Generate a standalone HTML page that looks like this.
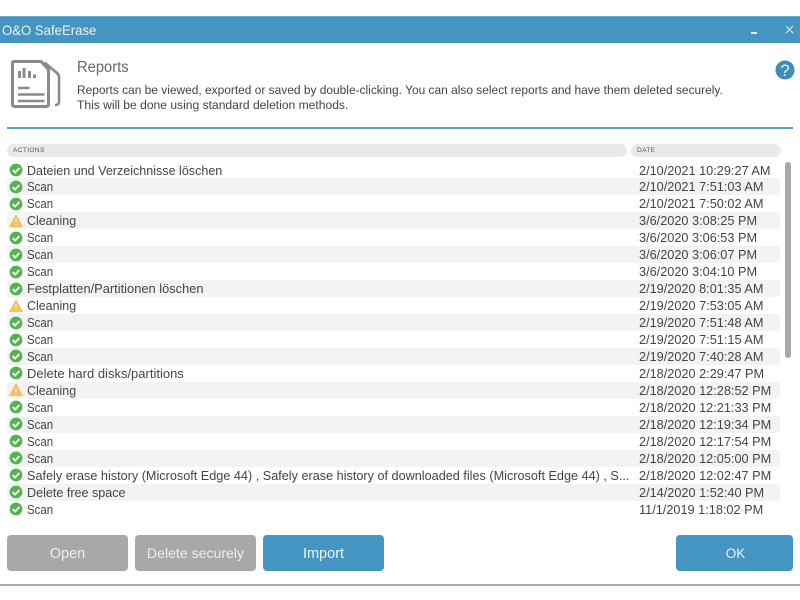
<!DOCTYPE html>
<html><head><meta charset="utf-8"><style>
html,body{margin:0;padding:0;background:#fff;width:800px;height:600px;overflow:hidden}
body{font-family:"Liberation Sans",sans-serif;color:#444;position:relative;filter:blur(.3px)}
.a{position:absolute;white-space:nowrap}
.sx{transform-origin:0 50%}
.row{position:absolute;left:7px;width:773px;height:17px}
.row.s{background:#f3f3f3;border-radius:3px}
.row svg{position:absolute;left:2px;top:1.5px}
.row .t{position:absolute;left:20px;top:0;line-height:17px;font-size:13px;color:#444;white-space:nowrap;transform-origin:0 50%}
.row .d{position:absolute;left:632px;top:0;line-height:17px;font-size:13px;color:#444;white-space:nowrap;transform-origin:0 50%;transform:scaleX(.978)}
.sc{transform:scaleX(.88)}
.cl{transform:scaleX(.957)}
.btn{position:absolute;top:535px;height:36px;line-height:38px;text-align:center;color:#fff;font-size:14.5px;border-radius:4px}
</style></head><body>
<svg width="0" height="0" style="position:absolute"><defs>
<symbol id="ok" viewBox="0 0 14 14"><circle cx="7" cy="7" r="6.4" fill="#52b44f"/><path d="M3.7 7.100l2.400 2.400 4.300-4.500" fill="none" stroke="#fff" stroke-width="1.900"/></symbol>
<symbol id="w" viewBox="0 0 14 14"><path d="M7 1.200L13.400 12.600H.6Z" fill="#f2c25e" stroke="#f2c25e" stroke-linejoin="round"/><path d="M7 5v4M7 10.200v1.200" stroke="#fff" stroke-width="1"/></symbol>
</defs></svg>

<div class="a" style="left:0;top:16px;width:800px;height:27px;background:#4495c1;border-top:1px solid #6aaccf;box-sizing:border-box"></div>
<div class="a sx" style="left:2px;top:22px;font-size:14px;line-height:16px;color:#e8f3f8;transform:scaleX(.94)">O&amp;O SafeErase</div>
<div class="a" style="left:751px;top:32px;width:6px;height:1.500px;background:#dceaf2"></div>
<svg class="a" style="left:785px;top:25px" width="9" height="9"><path d="M1 1l7 7M8 1l-7 7" stroke="#dceaf2" stroke-width="1.100"/></svg>

<svg class="a" style="left:0;top:50px" width="70" height="70" viewBox="0 50 70 70" fill="none" stroke="#8a8a8a">
<path d="M14 61.500H41L48.500 69.500V104Q48.500 106.500 46 106.500H15Q12.500 106.500 12.500 104V63Q12.500 61.500 14 61.500Z" stroke-width="3"/>
<path d="M44.500 62.500L57 73Q59 75 59 77V102Q59 105 55 105" stroke-width="2.600"/>
<path d="M19.500 78V71M24 78V68M29.500 78V71M34.500 78V74.500" stroke-width="3"/>
<path d="M18 88H29.500M18 94.500H44.500M18 101H44.500" stroke-width="2.400"/>
</svg>

<div class="a sx" style="left:77px;top:59px;font-size:15.500px;line-height:18px;color:#666;transform:scaleX(.95)">Reports</div>
<div class="a sx" style="left:77px;top:83px;font-size:12.400px;line-height:15px;color:#444;transform:scaleX(.963)">Reports can be viewed, exported or saved by double-clicking. You can also select reports and have them deleted securely.</div>
<div class="a sx" style="left:77px;top:98px;font-size:12.400px;line-height:15px;color:#444;transform:scaleX(.975)">This will be done using standard deletion methods.</div>

<svg class="a" style="left:775px;top:60px" width="20" height="20"><circle cx="10" cy="10" r="9.500" fill="#3e8cb8"/><text x="10" y="16" text-anchor="middle" font-family="Liberation Sans" font-size="17" fill="#e8f3f8">?</text></svg>

<div class="a" style="left:7px;top:127px;width:786px;height:1.500px;background:#5a9fc0"></div>

<div class="a" style="left:7px;top:144px;width:620px;height:13px;background:#eaeaea;border-radius:7px"></div>
<div class="a" style="left:13px;top:146px;font-size:6.500px;line-height:9px;color:#555;letter-spacing:.4px">ACTIONS</div>
<div class="a" style="left:631px;top:144px;width:150px;height:13px;background:#eaeaea;border-radius:7px"></div>
<div class="a" style="left:637px;top:146px;font-size:6.500px;line-height:9px;color:#555;letter-spacing:.4px">DATE</div>

<div class="a" style="left:785px;top:162px;width:6px;height:196px;background:#a8a8a8;border-radius:3px"></div>

<div class="row" style="top:161.500px"><svg width="14" height="14"><use href="#ok"/></svg><span class="t" style="transform:scaleX(.965)">Dateien und Verzeichnisse löschen</span><span class="d">2/10/2021 10:29:27 AM</span></div>
<div class="row s" style="top:178.450px"><svg width="14" height="14"><use href="#ok"/></svg><span class="t sc">Scan</span><span class="d">2/10/2021 7:51:03 AM</span></div>
<div class="row" style="top:195.400px"><svg width="14" height="14"><use href="#ok"/></svg><span class="t sc">Scan</span><span class="d">2/10/2021 7:50:02 AM</span></div>
<div class="row s" style="top:212.350px"><svg width="14" height="14"><use href="#w"/></svg><span class="t cl">Cleaning</span><span class="d">3/6/2020 3:08:25 PM</span></div>
<div class="row" style="top:229.300px"><svg width="14" height="14"><use href="#ok"/></svg><span class="t sc">Scan</span><span class="d">3/6/2020 3:06:53 PM</span></div>
<div class="row s" style="top:246.250px"><svg width="14" height="14"><use href="#ok"/></svg><span class="t sc">Scan</span><span class="d">3/6/2020 3:06:07 PM</span></div>
<div class="row" style="top:263.200px"><svg width="14" height="14"><use href="#ok"/></svg><span class="t sc">Scan</span><span class="d">3/6/2020 3:04:10 PM</span></div>
<div class="row s" style="top:280.150px"><svg width="14" height="14"><use href="#ok"/></svg><span class="t" style="transform:scaleX(.989)">Festplatten/Partitionen löschen</span><span class="d">2/19/2020 8:01:35 AM</span></div>
<div class="row" style="top:297.100px"><svg width="14" height="14"><use href="#w"/></svg><span class="t cl">Cleaning</span><span class="d">2/19/2020 7:53:05 AM</span></div>
<div class="row s" style="top:314.050px"><svg width="14" height="14"><use href="#ok"/></svg><span class="t sc">Scan</span><span class="d">2/19/2020 7:51:48 AM</span></div>
<div class="row" style="top:331px"><svg width="14" height="14"><use href="#ok"/></svg><span class="t sc">Scan</span><span class="d">2/19/2020 7:51:15 AM</span></div>
<div class="row s" style="top:347.950px"><svg width="14" height="14"><use href="#ok"/></svg><span class="t sc">Scan</span><span class="d">2/19/2020 7:40:28 AM</span></div>
<div class="row" style="top:364.900px"><svg width="14" height="14"><use href="#ok"/></svg><span class="t">Delete hard disks/partitions</span><span class="d">2/18/2020 2:29:47 PM</span></div>
<div class="row s" style="top:381.850px"><svg width="14" height="14"><use href="#w"/></svg><span class="t cl">Cleaning</span><span class="d">2/18/2020 12:28:52 PM</span></div>
<div class="row" style="top:398.800px"><svg width="14" height="14"><use href="#ok"/></svg><span class="t sc">Scan</span><span class="d">2/18/2020 12:21:33 PM</span></div>
<div class="row s" style="top:415.750px"><svg width="14" height="14"><use href="#ok"/></svg><span class="t sc">Scan</span><span class="d">2/18/2020 12:19:34 PM</span></div>
<div class="row" style="top:432.700px"><svg width="14" height="14"><use href="#ok"/></svg><span class="t sc">Scan</span><span class="d">2/18/2020 12:17:54 PM</span></div>
<div class="row s" style="top:449.650px"><svg width="14" height="14"><use href="#ok"/></svg><span class="t sc">Scan</span><span class="d">2/18/2020 12:05:00 PM</span></div>
<div class="row" style="top:466.600px"><svg width="14" height="14"><use href="#ok"/></svg><span class="t" style="transform:scaleX(.974)">Safely erase history (Microsoft Edge 44) , Safely erase history of downloaded files (Microsoft Edge 44) , S...</span><span class="d">2/18/2020 12:02:47 PM</span></div>
<div class="row s" style="top:483.550px"><svg width="14" height="14"><use href="#ok"/></svg><span class="t" style="transform:scaleX(.967)">Delete free space</span><span class="d">2/14/2020 1:52:40 PM</span></div>
<div class="row" style="top:500.500px"><svg width="14" height="14"><use href="#ok"/></svg><span class="t sc">Scan</span><span class="d">11/1/2019 1:18:02 PM</span></div>

<div class="btn" style="left:7px;width:121px;background:#a8a8a8;color:#eee">Open</div>
<div class="btn" style="left:135px;width:121px;background:#a8a8a8;color:#eee;font-size:14.100px;line-height:37px">Delete securely</div>
<div class="btn" style="left:263px;width:121px;background:#4495c1;color:#eaf4f9">Import</div>
<div class="btn" style="left:676px;width:117px;box-sizing:border-box;padding-left:2px;background:#4495c1;color:#eaf4f9;font-size:13.500px;line-height:37px">OK</div>

<div class="a" style="left:0;top:584px;width:800px;height:1.500px;background:#aaa"></div>
</body></html>
